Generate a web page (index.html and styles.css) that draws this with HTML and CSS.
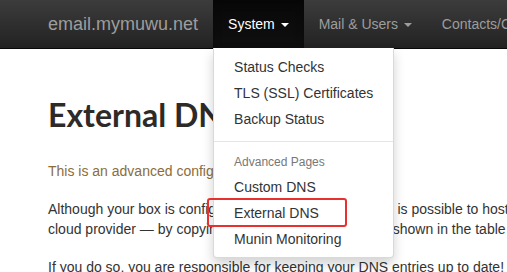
FILE: index.html
```html
<!DOCTYPE html>
<html lang="en">
<head>
  <meta charset="UTF-8" />
  <meta name="viewport" content="width=device-width, initial-scale=1" />
  <title>External DNS - email.mymuwu.net</title>
  <link rel="stylesheet" href="styles.css">
</head>
<body>
  <nav class="navbar">
    <a class="brand" href="#">email.mymuwu.net</a>
    <ul class="nav">
      <li class="nav-item open">
        <a href="#" class="nav-link">System <span class="caret"></span></a>
        <ul class="dropdown">
          <li><a href="#">Status Checks</a></li>
          <li><a href="#">TLS (SSL) Certificates</a></li>
          <li><a href="#">Backup Status</a></li>
          <li class="divider"></li>
          <li class="dropdown-header">Advanced Pages</li>
          <li><a href="#">Custom DNS</a></li>
          <li class="marked"><a href="#">External DNS</a></li>
          <li><a href="#">Munin Monitoring</a></li>
        </ul>
      </li>
      <li class="nav-item"><a href="#" class="nav-link">Mail &amp; Users <span class="caret"></span></a></li>
      <li class="nav-item"><a href="#" class="nav-link">Contacts/Calendar</a></li>
    </ul>
  </nav>

  <main class="content">
    <h2 class="page-title">External DNS</h2>
    <p class="text-warning">This is an advanced configuration page.</p>
    <p>Although your box is configured to serve its own DNS, it is possible to host your DNS elsewhere &mdash; such as in the DNS control panel provided by your domain name registrar or virtual cloud provider &mdash; by copying the DNS zone information shown in the table below into your external DNS server&rsquo;s control panel.</p>
    <p>If you do so, you are responsible for keeping your DNS entries up to date!</p>
  </main>
</body>
</html>
```

FILE: styles.css
```css
body {
  margin: 0;
  font-family: 'Liberation Sans', Arial, sans-serif;
  font-size: 14px;
  line-height: 20px;
  color: #333;
  background: #fff;
  overflow: hidden;
}

a {
  text-decoration: none;
}

/* Barra de navegação */
.navbar {
  display: flex;
  height: 48px;
  background: linear-gradient(to bottom, #3c3c3c, #222);
  border-bottom: 1px solid #080808;
  white-space: nowrap;
  position: relative;
  z-index: 10;
}

.brand {
  padding: 0 15px 0 48px;
  font-size: 18px;
  line-height: 48px;
  color: #9d9d9d;
}

.nav {
  display: flex;
  margin: 0;
  padding: 0;
  list-style: none;
}

.nav-item {
  position: relative;
}

.nav-link {
  display: block;
  padding: 0 15px;
  line-height: 48px;
  color: #9d9d9d;
}

.nav-item.open .nav-link {
  color: #fff;
  background: linear-gradient(to bottom, #080808, #0f0f0f);
  box-shadow: inset 0 3px 9px rgba(0, 0, 0, 0.25);
}

.caret {
  display: inline-block;
  width: 0;
  height: 0;
  margin-left: 2px;
  vertical-align: middle;
  border-top: 4px solid;
  border-left: 4px solid transparent;
  border-right: 4px solid transparent;
}

/* Menu suspenso */
.dropdown {
  position: absolute;
  top: 100%;
  left: 0;
  margin: 0;
  padding: 6px 0 5px;
  list-style: none;
  min-width: 160px;
  background: #fff;
  border: 1px solid rgba(0, 0, 0, 0.15);
  border-top: 0;
  border-radius: 0 0 4px 4px;
  box-shadow: 0 6px 12px rgba(0, 0, 0, 0.175);
}

.dropdown li a {
  display: block;
  padding: 3px 20px;
  color: #333;
}

.dropdown .divider {
  height: 1px;
  margin: 9px 0;
  background: #e5e5e5;
}

.dropdown-header {
  padding: 3px 20px;
  font-size: 12px;
  line-height: 17px;
  color: #777;
}

.marked {
  position: relative;
}

.marked::after {
  content: "";
  position: absolute;
  top: -2px;
  left: -7px;
  width: 136px;
  height: 25px;
  border: 2px solid #e8312f;
  border-radius: 3px;
}

/* Conteúdo */
.content {
  width: 1140px;
  padding: 0 48px;
}

.page-title {
  margin: 46px 0 26px;
  font-family: 'Lato', sans-serif;
  font-size: 32px;
  font-weight: 700;
  line-height: 40px;
  color: #2d2a28;
}

.content p {
  margin: 0 0 18px;
}

.content .text-warning {
  color: #8a6d3b;
}
```
